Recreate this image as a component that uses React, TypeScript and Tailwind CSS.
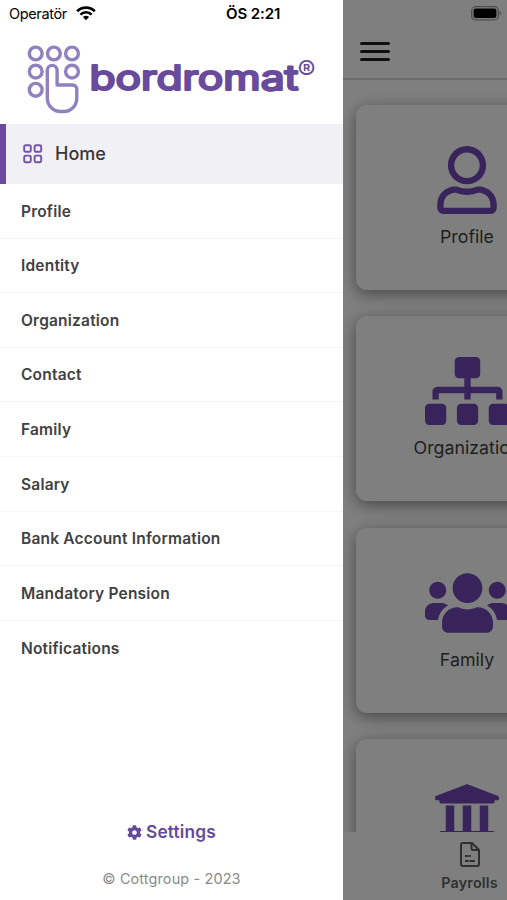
import React from "react";
import { FaCog, FaRegUser, FaSitemap, FaUniversity, FaUsers } from "react-icons/fa";
import type { IconType } from "react-icons";

const menuItems = [
  "Profile",
  "Identity",
  "Organization",
  "Contact",
  "Family",
  "Salary",
  "Bank Account Information",
  "Mandatory Pension",
  "Notifications",
];

const cards: { id: string; title?: string; icon: IconType; iconClass: string }[] = [
  { id: "profile", title: "Profile", icon: FaRegUser, iconClass: "w-[60px]" },
  { id: "organization", title: "Organization", icon: FaSitemap, iconClass: "w-[85px]" },
  { id: "family", title: "Family", icon: FaUsers, iconClass: "w-[85px]" },
  { id: "bank", icon: FaUniversity, iconClass: "w-[68px]" },
];

function WifiIcon() {
  return (
    <svg width="20" height="15" viewBox="0 0 20 15" fill="none" stroke="#000">
      <path d="M1.2 5.3a12.6 12.6 0 0 1 17.6 0" strokeWidth="2.7" />
      <path d="M4.4 8.6a8 8 0 0 1 11.2 0" strokeWidth="2.6" />
      <path d="M10 14.2 6.9 11.1a4.5 4.5 0 0 1 6.2 0Z" fill="#000" stroke="none" />
    </svg>
  );
}

function BatteryIcon() {
  return (
    <svg width="31" height="15" viewBox="0 0 31 15">
      <rect x="0.7" y="0.7" width="26.6" height="13.2" rx="4" fill="none" stroke="#000" strokeOpacity="0.4" strokeWidth="1.3" />
      <rect x="2.6" y="2.6" width="22.8" height="9.4" rx="2" fill="#000" />
      <path d="M28.6 5v4.6c1.8-.6 1.8-4 0-4.6Z" fill="#000" fillOpacity="0.4" />
    </svg>
  );
}

function Logo() {
  return (
    <svg width="292" height="72" viewBox="0 0 292 72">
      <g fill="none" stroke="#9082bf" strokeWidth="3.4">
        <circle cx="9.7" cy="10.5" r="6.4" />
        <circle cx="27.9" cy="10.5" r="6.4" />
        <circle cx="46" cy="10.5" r="6.4" />
        <circle cx="9.7" cy="28.6" r="6.4" />
        <circle cx="46" cy="28.6" r="6.4" />
        <circle cx="9.7" cy="46.8" r="6.4" />
        <path
          d="M21.3 27.3a4.9 4.9 0 0 1 9.8 0V42H46.6a4.2 4.2 0 0 1 4.2 4.2V55C50.8 63 44.6 68.5 38 68.5H34.6C27.6 68.5 21.3 63 21.3 55Z"
          strokeLinejoin="round"
        />
      </g>
      <text
        x="63.5"
        y="46.8"
        textLength="209"
        lengthAdjust="spacingAndGlyphs"
        fill="#684b9c"
        stroke="#684b9c"
        strokeWidth="2.2"
        strokeLinejoin="round"
        className="font-['Inter',sans-serif] text-[34px] font-normal"
      >
        bordromat
      </text>
      <text x="271.5" y="37" fill="#684b9c" className="font-['Inter',sans-serif] text-[27px] font-normal">
        ®
      </text>
    </svg>
  );
}

function GridIcon() {
  return (
    <svg width="20" height="20" viewBox="0 0 20 20" fill="none" stroke="#7253a8" strokeWidth="1.9">
      <rect x="1.2" y="1.2" width="6.6" height="6.6" rx="1.4" />
      <rect x="11.6" y="1.2" width="6.6" height="6.6" rx="1.4" />
      <rect x="1.2" y="11.6" width="6.6" height="6.6" rx="1.4" />
      <rect x="11.6" y="11.6" width="6.6" height="6.6" rx="1.4" />
    </svg>
  );
}

function PayrollIcon() {
  return (
    <svg width="20" height="25" viewBox="0 0 20 25" fill="none" stroke="#606060" strokeWidth="2" strokeLinejoin="round">
      <path d="M3 1h9l7 7v14a2 2 0 0 1-2 2H3a2 2 0 0 1-2-2V3a2 2 0 0 1 2-2Z" />
      <path d="M11.5 1v5.5A1.5 1.5 0 0 0 13 8h6" />
      <path d="M5 14h3.5M9.200 14H11M5 19h3.700M9.400 19H15" />
    </svg>
  );
}

function Drawer() {
  return (
    <aside className="flex h-full w-[343px] shrink-0 flex-col bg-white">
      <div className="flex h-[27px] items-center text-[15px] text-black">
        <span className="ml-[9px] w-[67px] text-[14.5px] tracking-tight">Operatör</span>
        <WifiIcon />
        <span className="ml-[130px] pt-px font-semibold tracking-[-0.1px]">ÖS 2:21</span>
      </div>

      <div className="h-[97px] pt-[16px] pl-[26px]">
        <Logo />
      </div>

      <div className="flex h-[60px] items-center gap-3 border-l-[6px] border-[#6c4a9e] bg-[#f1f0f5] pb-px pl-[17px]">
        <GridIcon />
        <span className="text-[18px] font-medium text-[#38363d]">Home</span>
      </div>

      <ul className="flex flex-col">
        {menuItems.map((item) => (
          <li
            key={item}
            className="flex h-[54.6px] items-center border-b border-[#f5f5f6] pt-px pl-[21px] text-[15.5px] font-semibold tracking-[0.2px] text-[#414043] last:border-b-0"
          >
            {item}
          </li>
        ))}
      </ul>

      <div className="mt-auto flex h-[80px] flex-col items-center">
        <div className="flex items-center gap-1 text-[17.3px] leading-6 font-semibold tracking-[0.2px] text-[#65499c]">
          <FaCog size={15} />
          Settings
        </div>
        <p className="mt-[23px] text-[14.5px] leading-6 tracking-[0.1px] text-[#8a8a8a]">© Cottgroup - 2023</p>
      </div>
    </aside>
  );
}

function Dashboard() {
  return (
    <main className="relative flex h-full flex-1 flex-col overflow-hidden bg-white">
      <div className="flex h-[27px] shrink-0 items-center justify-end pr-[5px]">
        <BatteryIcon />
      </div>
      <header className="h-[53px] shrink-0 border-b-2 border-[#d8d8d8] pt-[15px] pl-[17px]">
        <div className="flex w-[30px] flex-col gap-[5px]">
          <span className="h-[3px] rounded-full bg-[#202020]" />
          <span className="h-[3px] rounded-full bg-[#202020]" />
          <span className="h-[3px] rounded-full bg-[#202020]" />
        </div>
      </header>

      <div className="flex min-h-0 flex-1 flex-col gap-[26.3px] overflow-hidden pt-[25px] pl-[13px]">
        {cards.map(({ id, title, icon: Icon, iconClass }) => (
          <div
            key={id}
            className="flex h-[185px] w-[222px] shrink-0 flex-col items-center rounded-[11px] bg-white pt-[41px] shadow-[0_4px_16px_rgba(0,0,0,0.45)]"
          >
            <Icon className={`h-[68px] shrink-0 text-[#7049b5] ${iconClass}`} />
            {title && <span className="mt-[10px] text-[17.8px] leading-[26px] text-[#3f3f3f]">{title}</span>}
          </div>
        ))}
      </div>

      <nav className="flex h-[68px] shrink-0 flex-col items-center bg-white pt-[10px] pl-[89px]">
        <PayrollIcon />
        <span className="mt-[6px] text-[14.3px] leading-5 font-semibold tracking-[0.2px] text-[#606060]">Payrolls</span>
      </nav>

      {/* backdrop behind the open drawer */}
      <div className="absolute inset-0 bg-black/50" />
    </main>
  );
}

export default function App() {
  return (
    <div className="flex h-[900px] w-[507px] overflow-hidden font-['Inter','Liberation_Sans',sans-serif]">
      <Drawer />
      <Dashboard />
    </div>
  );
}
